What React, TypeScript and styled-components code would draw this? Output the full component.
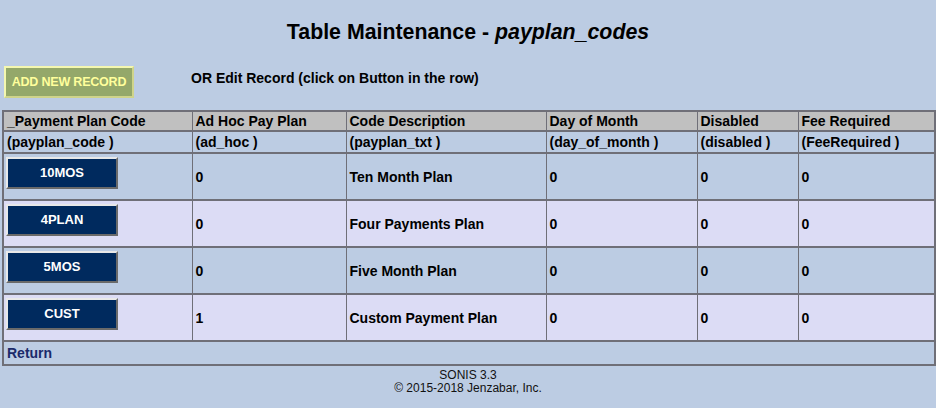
import React from 'react';
import styled, { createGlobalStyle } from 'styled-components';

const GlobalStyle = createGlobalStyle`
  html, body {
    margin: 0;
    padding: 0;
    background-color: #bccce3;
    font-family: "Liberation Sans", Arial, sans-serif;
    color: #000;
  }
`;

const Page = styled.div`
  display: flex;
  flex-direction: column;
  padding: 0 2px;
`;

const Title = styled.h1`
  margin: 20px 0 0;
  text-align: center;
  font-size: 21.33px;
  line-height: 24px;
  font-weight: bold;

  em {
    font-style: italic;
  }
`;

const Toolbar = styled.div`
  display: flex;
  align-items: flex-start;
  margin-top: 22px;
  height: 33px;
`;

const ButtonSlot = styled.div`
  width: 187px;
  padding-left: 2px;
`;

const AddButton = styled.button`
  width: 130px;
  height: 32px;
  padding: 0;
  background-color: #94a86a;
  color: #ffff9c;
  font-family: "Liberation Sans", Arial, sans-serif;
  font-size: 12.5px;
  font-weight: bold;
  letter-spacing: -0.2px;
  border: 2px solid;
  border-color: #f4f7b0 #cfd48a #cfd48a #f4f7b0;
  cursor: pointer;
`;

const Hint = styled.div`
  padding-top: 4px;
  font-size: 14px;
  font-weight: bold;
`;

const Table = styled.table`
  margin-top: 11px;
  width: 932px;
  border-collapse: collapse;
  border: 2px solid #6f6f78;
  table-layout: fixed;
`;

const HeadCell = styled.th<{ $w: number }>`
  box-sizing: border-box;
  width: ${(p) => p.$w}px;
  height: 20px;
  padding: 0 3px;
  background-color: #c0c0c0;
  border: 1px solid #6f6f78;
  border-bottom-width: 2px;
  text-align: left;
  font-size: 14px;
  font-weight: bold;
  white-space: nowrap;
  overflow: hidden;
`;

const FieldCell = styled.td`
  height: 20px;
  padding: 0 3px;
  background-color: #bccce3;
  border: 1px solid #6f6f78;
  border-bottom-width: 2px;
  font-size: 14px;
  font-weight: bold;
  white-space: nowrap;
  overflow: hidden;
`;

const DataRow = styled.tr<{ $alt: boolean }>`
  background-color: ${(p) => (p.$alt ? '#dcdcf5' : '#bccce3')};
`;

const DataCell = styled.td`
  height: 45px;
  padding: 0 3px;
  border: 1px solid #6f6f78;
  border-bottom-width: 2px;
  vertical-align: middle;
  font-size: 14px;
  font-weight: bold;
  white-space: nowrap;
`;

const CodeButton = styled.button`
  display: block;
  width: 112px;
  height: 32px;
  margin: 0 0 8px -1px;
  padding: 0;
  background-color: #002a5e;
  color: #ffffff;
  font-family: "Liberation Sans", Arial, sans-serif;
  font-size: 13px;
  font-weight: bold;
  border: 2px solid;
  border-color: #e8e8e8 #6a6a6a #6a6a6a #e8e8e8;
  cursor: pointer;
`;

const ReturnCell = styled.td`
  height: 22px;
  padding: 0 3px;
  background-color: #bccce3;
  border: 1px solid #6f6f78;
  font-size: 14px;
  font-weight: bold;
`;

const ReturnLink = styled.a`
  color: #1b2a6b;
  text-decoration: none;
`;

const Footer = styled.div`
  margin-top: 3px;
  text-align: center;
  font-size: 12px;
  line-height: 13px;
  color: #111;
`;

const columns = [
  { label: '_Payment Plan Code', field: '(payplan_code )', w: 189 },
  { label: 'Ad Hoc Pay Plan', field: '(ad_hoc )', w: 154 },
  { label: 'Code Description', field: '(payplan_txt )', w: 200 },
  { label: 'Day of Month', field: '(day_of_month )', w: 151 },
  { label: 'Disabled', field: '(disabled )', w: 101 },
  { label: 'Fee Required', field: '(FeeRequired )', w: 137 },
];

const rows = [
  { code: '10MOS', adHoc: '0', desc: 'Ten Month Plan' },
  { code: '4PLAN', adHoc: '0', desc: 'Four Payments Plan' },
  { code: '5MOS', adHoc: '0', desc: 'Five Month Plan' },
  { code: 'CUST', adHoc: '1', desc: 'Custom Payment Plan' },
];

export default function App() {
  return (
    <>
      <GlobalStyle />
      <Page>
        <Title>
          Table Maintenance - <em>payplan_codes</em>
        </Title>
        <Toolbar>
          <ButtonSlot>
            <AddButton>ADD NEW RECORD</AddButton>
          </ButtonSlot>
          <Hint>OR Edit Record (click on Button in the row)</Hint>
        </Toolbar>
        <Table>
          <thead>
            <tr>
              {columns.map((c) => (
                <HeadCell key={c.label} $w={c.w}>
                  {c.label}
                </HeadCell>
              ))}
            </tr>
          </thead>
          <tbody>
            <tr>
              {columns.map((c) => (
                <FieldCell key={c.field}>{c.field}</FieldCell>
              ))}
            </tr>
            {rows.map((r, i) => (
              <DataRow key={r.code} $alt={i % 2 === 1}>
                <DataCell>
                  <CodeButton>{r.code}</CodeButton>
                </DataCell>
                <DataCell>{r.adHoc}</DataCell>
                <DataCell>{r.desc}</DataCell>
                <DataCell>0</DataCell>
                <DataCell>0</DataCell>
                <DataCell>0</DataCell>
              </DataRow>
            ))}
            <tr>
              <ReturnCell colSpan={6}>
                <ReturnLink href="#">Return</ReturnLink>
              </ReturnCell>
            </tr>
          </tbody>
        </Table>
        <Footer>
          SONIS 3.3
          <br />© 2015-2018 Jenzabar, Inc.
        </Footer>
      </Page>
    </>
  );
}
